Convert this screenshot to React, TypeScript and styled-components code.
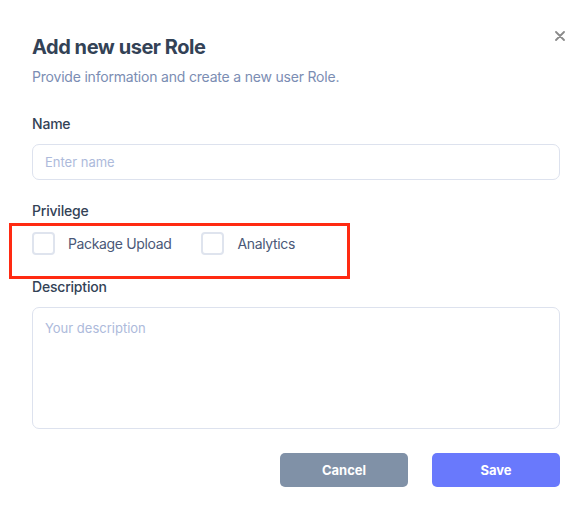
import React from 'react';
import styled, { createGlobalStyle } from 'styled-components';

const GlobalStyle = createGlobalStyle`
    html, body {
        margin: 0;
        padding: 0;
        background: #ffffff;
        font-family: Inter, 'Noto Sans', sans-serif;
    }
    * {
        box-sizing: border-box;
    }
`;

const App = () => {
    return (
        <>
            <GlobalStyle />
            <Dialog>
                <CloseButton type="button" aria-label="Close">
                    <svg width="10" height="10" viewBox="0 0 10 10">
                        <path d="M1 1L9 9M9 1L1 9" stroke="#8a8a8a" strokeWidth="1.8" strokeLinecap="round" />
                    </svg>
                </CloseButton>
                <Title>Add new user Role</Title>
                <Subtitle>Provide information and create a new user Role.</Subtitle>

                <Label>Name</Label>
                <Input type="text" placeholder="Enter name" />

                <Label $top={21}>Privilege</Label>
                <CheckRow>
                    <Highlight />
                    <CheckItem>
                        <Box type="checkbox" />
                        <CheckText>Package Upload</CheckText>
                    </CheckItem>
                    <CheckItem>
                        <Box type="checkbox" />
                        <CheckText>Analytics</CheckText>
                    </CheckItem>
                </CheckRow>

                <Label $top={22}>Description</Label>
                <TextArea placeholder="Your description" />

                <Actions>
                    <Button type="button" $variant="cancel">Cancel</Button>
                    <Button type="button" $variant="save">Save</Button>
                </Actions>
            </Dialog>
        </>
    );
};

export default App;

const Dialog = styled.div`
    position: relative;
    width: 588px;
    height: 514px;
    padding: 35px 28px 0 32px;
    display: flex;
    flex-direction: column;
`;

const CloseButton = styled.button`
    position: absolute;
    top: 31px;
    right: 23px;
    width: 10px;
    height: 10px;
    padding: 0;
    border: none;
    background: none;
    display: flex;
    cursor: pointer;
`;

const Title = styled.h2`
    margin: 0;
    font-size: 20px;
    line-height: 24px;
    font-weight: 700;
    color: #334256;
    letter-spacing: -0.45px;
`;

const Subtitle = styled.p`
    margin: 8px 0 0;
    font-size: 14px;
    line-height: 20px;
    color: #7b8db3;
    letter-spacing: -0.2px;
`;

const Label = styled.label<{ $top?: number }>`
    display: block;
    margin-top: ${(p) => p.$top ?? 27}px;
    font-size: 14px;
    line-height: 20px;
    font-weight: 500;
    color: #334256;
    letter-spacing: -0.2px;
`;

const Input = styled.input`
    margin-top: 10px;
    width: 100%;
    height: 36px;
    padding: 0 12px;
    border: 1px solid #dde2ee;
    border-radius: 7px;
    font-family: inherit;
    font-size: 13px;
    color: #334256;
    outline: none;

    &::placeholder {
        color: #adbadb;
    }
`;

const CheckRow = styled.div`
    position: relative;
    margin-top: 11px;
    display: flex;
    gap: 30px;
`;

// annotation frame drawn over the privilege row
const Highlight = styled.div`
    position: absolute;
    left: -23px;
    top: -9px;
    width: 341px;
    height: 56px;
    border: 3px solid #ff2a12;
    pointer-events: none;
`;

const CheckItem = styled.label`
    display: flex;
    align-items: center;
    gap: 13px;
    cursor: pointer;
`;

const Box = styled.input`
    appearance: none;
    margin: 0;
    width: 23px;
    height: 23px;
    border: 2px solid #dfe4ee;
    border-radius: 4px;
    background: #fff;
    cursor: pointer;
`;

const CheckText = styled.span`
    font-size: 14px;
    line-height: 20px;
    color: #4a5877;
    letter-spacing: -0.35px;
`;

const TextArea = styled.textarea`
    margin-top: 10px;
    width: 100%;
    height: 122px;
    padding: 12px 12px;
    border: 1px solid #dde2ee;
    border-radius: 7px;
    font-family: inherit;
    font-size: 13px;
    color: #334256;
    resize: none;
    outline: none;

    &::placeholder {
        color: #adbadb;
    }
`;

const Actions = styled.div`
    margin-top: 24px;
    display: flex;
    justify-content: flex-end;
    gap: 24px;
`;

const Button = styled.button<{ $variant: 'cancel' | 'save' }>`
    width: 128px;
    height: 34px;
    border: none;
    border-radius: 5px;
    background: ${(p) => (p.$variant === 'save' ? '#6979fc' : '#8091a7')};
    color: #ffffff;
    font-family: inherit;
    font-size: 13px;
    font-weight: 700;
    cursor: pointer;
`;
